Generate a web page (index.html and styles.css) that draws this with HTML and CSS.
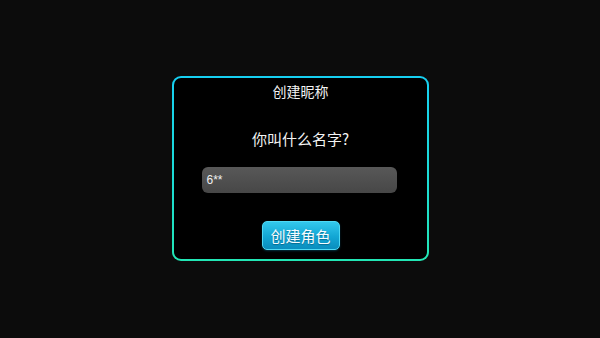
FILE: index.html
```html
<!DOCTYPE html>
<html lang="zh">
<head>
<meta charset="utf-8">
<link rel="stylesheet" href="styles.css">
</head>
<body>
<div class="stage">
  <div class="dialog">
    <div class="title">创建昵称</div>
    <div class="question">你叫什么名字?</div>
    <div class="field">6**</div>
    <button class="btn">创建角色</button>
  </div>
</div>
</body>
</html>
```

FILE: styles.css
```css
html, body {
  margin: 0;
  padding: 0;
  background: #0c0c0c;
  font-family: "Noto Sans CJK SC", "Noto Sans", sans-serif;
  color: #f4f4f4;
}
.stage {
  width: 600px;
  height: 338px;
  box-sizing: border-box;
  padding-top: 76px;
  display: flex;
  align-items: flex-start;
  justify-content: center;
}
.dialog {
  width: 257px;
  height: 185px;
  box-sizing: border-box;
  margin-left: 1px;
  border: 2px solid transparent;
  border-radius: 9px;
  background:
    linear-gradient(#000, #000) padding-box,
    linear-gradient(180deg, #16d0f2 0%, #1cdcd6 55%, #22e6b4 100%) border-box;
  display: flex;
  flex-direction: column;
  align-items: center;
  padding-top: 3px;
}
.title {
  font-size: 14px;
  line-height: 20px;
  color: #f4f4f4;
}
.question {
  margin-top: 28px;
  font-size: 15px;
  line-height: 20px;
  color: #f4f4f4;
}
.field {
  margin-top: 18px;
  width: 195px;
  height: 26px;
  box-sizing: border-box;
  margin-right: 3px;
  border-radius: 6px;
  background: linear-gradient(180deg, #585858 0%, #474747 100%);
  font-family: "Liberation Sans", Arial, sans-serif;
  font-size: 12px;
  line-height: 26px;
  padding-left: 5px;
  color: #f0f0f0;
}
.btn {
  margin-top: 28px;
  width: 78px;
  height: 29px;
  box-sizing: border-box;
  border: 1px solid #4fd9f5;
  border-radius: 5px;
  background: linear-gradient(180deg, #33c8ec 0%, #12a6d4 55%, #0a8dbd 100%);
  color: #f6fcff;
  font-family: "Noto Sans CJK SC", sans-serif;
  font-size: 15px;
  line-height: 25px;
  padding: 0;
  text-shadow: 0 1px 1px rgba(0, 60, 90, 0.5);
  box-shadow: 0 1px 2px rgba(0, 120, 160, 0.4);
}
```
